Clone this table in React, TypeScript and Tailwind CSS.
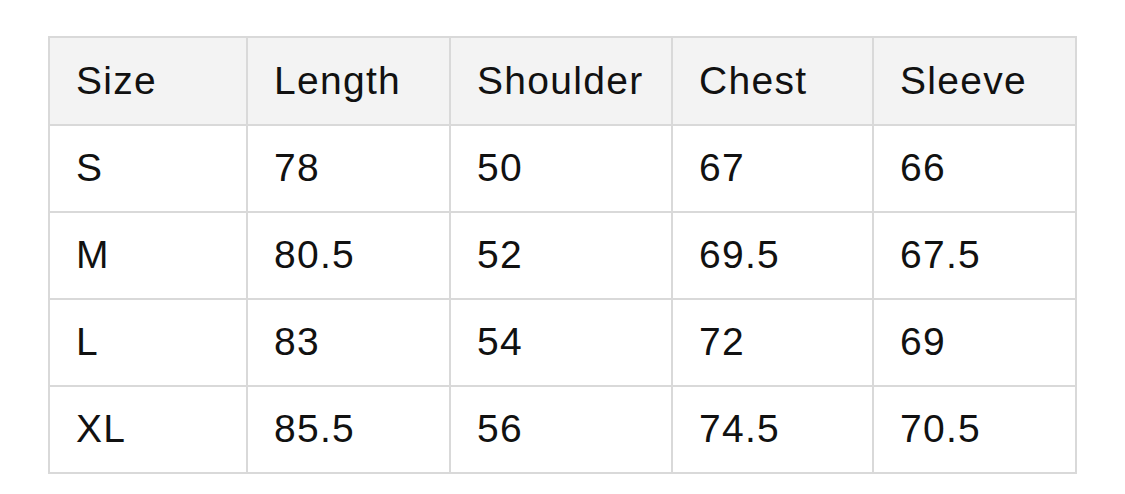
import React from "react";

const header = ["Size", "Length", "Shoulder", "Chest", "Sleeve"];
const rows = [
  ["S", "78", "50", "67", "66"],
  ["M", "80.5", "52", "69.5", "67.5"],
  ["L", "83", "54", "72", "69"],
  ["XL", "85.5", "56", "74.5", "70.5"],
];
const widths = ["w-[198px]", "w-[203px]", "w-[222px]", "w-[201px]", "w-[203px]"];

export default function App() {
  return (
    <div className="min-h-[494px] w-[1125px] bg-white pt-[36px] pl-[48px]">
      <table
        className="border-collapse text-[#111111] text-[39px] tracking-[1.3px]"
        style={{ fontFamily: '"Liberation Sans", Arial, sans-serif' }}
      >
        <thead>
          <tr className="bg-[#f3f3f3]">
            {header.map((h, i) => (
              <th
                key={h}
                className={`${widths[i]} h-[88px] border-2 border-[#d9d9d9] pl-[26px] text-left font-normal`}
              >
                {h}
              </th>
            ))}
          </tr>
        </thead>
        <tbody>
          {rows.map((r) => (
            <tr key={r[0]}>
              {r.map((c, i) => (
                <td
                  key={i}
                  className={`${widths[i]} h-[87px] border-2 border-[#d9d9d9] pl-[26px] text-left`}
                >
                  {c}
                </td>
              ))}
            </tr>
          ))}
        </tbody>
      </table>
    </div>
  );
}
